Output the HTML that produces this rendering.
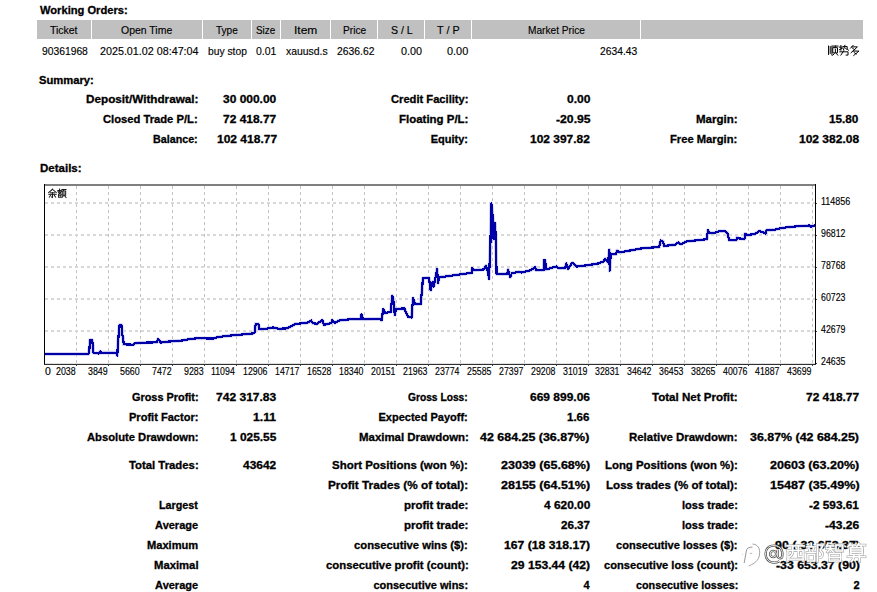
<!DOCTYPE html>
<html><head><meta charset="utf-8"><style>
html,body{margin:0;padding:0;background:#fff;width:877px;height:592px;overflow:hidden;position:relative}
.t{position:absolute;white-space:nowrap;font-family:"Liberation Sans",sans-serif;font-size:11px;line-height:13px;color:#000;transform-origin:0 0}
</style></head><body>
<div style="position:absolute;left:37px;top:20px;width:54px;height:19px;background:#c0c0c0"></div>
<div style="position:absolute;left:92px;top:20px;width:110px;height:19px;background:#c0c0c0"></div>
<div style="position:absolute;left:203px;top:20px;width:48px;height:19px;background:#c0c0c0"></div>
<div style="position:absolute;left:252px;top:20px;width:28px;height:19px;background:#c0c0c0"></div>
<div style="position:absolute;left:281px;top:20px;width:49px;height:19px;background:#c0c0c0"></div>
<div style="position:absolute;left:331px;top:20px;width:46px;height:19px;background:#c0c0c0"></div>
<div style="position:absolute;left:378px;top:20px;width:46px;height:19px;background:#c0c0c0"></div>
<div style="position:absolute;left:425px;top:20px;width:46px;height:19px;background:#c0c0c0"></div>
<div style="position:absolute;left:472px;top:20px;width:168px;height:19px;background:#c0c0c0"></div>
<div style="position:absolute;left:641px;top:20px;width:222px;height:19px;background:#c0c0c0"></div>
<svg style="position:absolute;left:0;top:0" width="877" height="592"><path d="M76.5 186V363" stroke="#c4c4c4" stroke-dasharray="3,3" fill="none"/><path d="M108.5 186V363" stroke="#c4c4c4" stroke-dasharray="3,3" fill="none"/><path d="M140.5 186V363" stroke="#c4c4c4" stroke-dasharray="3,3" fill="none"/><path d="M172.5 186V363" stroke="#c4c4c4" stroke-dasharray="3,3" fill="none"/><path d="M204.5 186V363" stroke="#c4c4c4" stroke-dasharray="3,3" fill="none"/><path d="M236.5 186V363" stroke="#c4c4c4" stroke-dasharray="3,3" fill="none"/><path d="M268.5 186V363" stroke="#c4c4c4" stroke-dasharray="3,3" fill="none"/><path d="M300.5 186V363" stroke="#c4c4c4" stroke-dasharray="3,3" fill="none"/><path d="M332.5 186V363" stroke="#c4c4c4" stroke-dasharray="3,3" fill="none"/><path d="M364.5 186V363" stroke="#c4c4c4" stroke-dasharray="3,3" fill="none"/><path d="M396.5 186V363" stroke="#c4c4c4" stroke-dasharray="3,3" fill="none"/><path d="M428.5 186V363" stroke="#c4c4c4" stroke-dasharray="3,3" fill="none"/><path d="M460.5 186V363" stroke="#c4c4c4" stroke-dasharray="3,3" fill="none"/><path d="M492.5 186V363" stroke="#c4c4c4" stroke-dasharray="3,3" fill="none"/><path d="M524.5 186V363" stroke="#c4c4c4" stroke-dasharray="3,3" fill="none"/><path d="M556.5 186V363" stroke="#c4c4c4" stroke-dasharray="3,3" fill="none"/><path d="M588.5 186V363" stroke="#c4c4c4" stroke-dasharray="3,3" fill="none"/><path d="M620.5 186V363" stroke="#c4c4c4" stroke-dasharray="3,3" fill="none"/><path d="M652.5 186V363" stroke="#c4c4c4" stroke-dasharray="3,3" fill="none"/><path d="M684.5 186V363" stroke="#c4c4c4" stroke-dasharray="3,3" fill="none"/><path d="M716.5 186V363" stroke="#c4c4c4" stroke-dasharray="3,3" fill="none"/><path d="M748.5 186V363" stroke="#c4c4c4" stroke-dasharray="3,3" fill="none"/><path d="M780.5 186V363" stroke="#c4c4c4" stroke-dasharray="3,3" fill="none"/><path d="M812.5 186V363" stroke="#c4c4c4" stroke-dasharray="3,3" fill="none"/><path d="M45 203H815" stroke="#d8d8d8" stroke-width="2" stroke-dasharray="3,3" fill="none"/><path d="M45 235H815" stroke="#d8d8d8" stroke-width="2" stroke-dasharray="3,3" fill="none"/><path d="M45 267H815" stroke="#d8d8d8" stroke-width="2" stroke-dasharray="3,3" fill="none"/><path d="M45 299H815" stroke="#d8d8d8" stroke-width="2" stroke-dasharray="3,3" fill="none"/><path d="M45 331H815" stroke="#d8d8d8" stroke-width="2" stroke-dasharray="3,3" fill="none"/><rect x="44" y="184" width="772" height="2" fill="#808080"/><rect x="44" y="184" width="1" height="181" fill="#000"/><rect x="815" y="184" width="1" height="181" fill="#000"/><rect x="45" y="363" width="770" height="1" fill="#e0e0e0"/><rect x="44" y="364" width="772" height="1" fill="#303030"/><rect x="76" y="365" width="1" height="1" fill="#404040"/><rect x="108" y="365" width="1" height="1" fill="#404040"/><rect x="140" y="365" width="1" height="1" fill="#404040"/><rect x="172" y="365" width="1" height="1" fill="#404040"/><rect x="204" y="365" width="1" height="1" fill="#404040"/><rect x="236" y="365" width="1" height="1" fill="#404040"/><rect x="268" y="365" width="1" height="1" fill="#404040"/><rect x="300" y="365" width="1" height="1" fill="#404040"/><rect x="332" y="365" width="1" height="1" fill="#404040"/><rect x="364" y="365" width="1" height="1" fill="#404040"/><rect x="396" y="365" width="1" height="1" fill="#404040"/><rect x="428" y="365" width="1" height="1" fill="#404040"/><rect x="460" y="365" width="1" height="1" fill="#404040"/><rect x="492" y="365" width="1" height="1" fill="#404040"/><rect x="524" y="365" width="1" height="1" fill="#404040"/><rect x="556" y="365" width="1" height="1" fill="#404040"/><rect x="588" y="365" width="1" height="1" fill="#404040"/><rect x="620" y="365" width="1" height="1" fill="#404040"/><rect x="652" y="365" width="1" height="1" fill="#404040"/><rect x="684" y="365" width="1" height="1" fill="#404040"/><rect x="716" y="365" width="1" height="1" fill="#404040"/><rect x="748" y="365" width="1" height="1" fill="#404040"/><rect x="780" y="365" width="1" height="1" fill="#404040"/><rect x="812" y="365" width="1" height="1" fill="#404040"/><rect x="816" y="203" width="1" height="1" fill="#404040"/><rect x="816" y="235" width="1" height="1" fill="#404040"/><rect x="816" y="267" width="1" height="1" fill="#404040"/><rect x="816" y="299" width="1" height="1" fill="#404040"/><rect x="816" y="331" width="1" height="1" fill="#404040"/><rect x="816" y="363" width="1" height="1" fill="#404040"/></svg>
<svg style="position:absolute;left:0;top:0" width="877" height="592"><polyline points="45.0,354.0 88.5,354.0 89.5,348.0 90.0,340.0 92.0,340.0 93.0,346.0 93.3,352.6 99.0,353.5 100.2,351.5 101.0,352.6 116.5,352.6 117.3,355.5 118.0,342.4 119.5,325.0 121.4,325.0 122.2,335.2 123.0,337.0 123.7,344.3 133.6,344.7 134.4,343.5 140.0,342.8 157.0,342.3 158.0,339.2 160.8,342.5 168.0,341.6 182.7,340.5 190.0,339.0 197.0,338.3 213.7,338.5 218.2,337.0 232.0,335.4 242.0,334.5 253.0,333.4 254.7,332.0 255.7,324.0 258.4,324.2 259.3,329.3 265.7,328.8 273.0,327.5 278.5,328.8 286.7,328.4 292.0,326.0 295.0,323.9 300.0,323.5 307.7,322.6 311.3,320.6 312.5,323.0 316.8,323.9 322.3,320.2 324.0,324.8 331.4,323.0 332.3,320.2 335.0,323.0 338.7,320.6 349.6,319.3 360.0,319.3 360.5,319.4 361.4,314.5 363.2,319.4 380.5,318.8 381.5,320.3 383.3,309.3 385.0,313.0 390.6,312.0 392.4,295.7 393.7,302.0 394.8,314.8 396.0,309.0 404.3,308.4 408.0,316.6 411.6,317.6 413.0,298.4 415.2,303.9 420.7,303.9 422.2,288.4 422.9,278.3 428.9,277.8 430.7,290.2 432.6,282.0 433.8,286.5 437.1,269.2 438.0,282.9 439.0,277.4 471.8,272.8 472.3,268.0 473.8,270.2 483.7,269.5 486.0,265.7 488.2,272.5 489.0,278.6 490.5,240.6 491.3,203.4 492.8,217.8 493.6,239.0 494.3,223.0 495.0,223.0 495.8,239.0 496.6,274.0 507.2,274.0 508.0,269.5 510.3,277.0 511.8,273.3 518.6,271.7 521.7,272.5 530.8,270.2 535.3,267.2 536.0,270.2 543.7,270.0 544.0,260.3 545.2,260.3 546.0,269.5 556.6,266.4 558.6,268.3 565.0,268.3 566.3,263.4 568.1,268.8 572.3,262.8 576.9,266.5 587.8,265.2 598.8,263.4 603.4,261.5 605.2,258.8 608.0,262.4 609.4,249.7 609.7,270.7 610.7,254.2 616.0,254.2 617.0,250.6 619.8,252.4 642.6,248.2 659.0,247.0 660.8,240.5 663.0,241.5 664.0,246.0 675.4,244.6 678.2,242.4 681.0,244.2 686.4,241.5 706.8,239.2 707.9,230.3 709.6,233.0 713.7,233.0 719.2,231.3 725.3,231.3 727.4,233.0 729.4,240.3 736.3,240.3 737.0,237.6 739.0,238.5 744.5,238.9 745.1,233.7 747.2,235.1 754.7,234.0 759.5,231.0 762.9,232.4 765.7,233.7 766.3,230.3 775.2,229.6 779.3,228.5 787.6,227.2 798.5,226.2 809.4,225.5 810.8,226.6 814.9,225.5" fill="none" stroke="#c8c8ec" stroke-width="3.6" stroke-linejoin="round"/><polyline points="45.0,354.0 88.5,354.0 89.5,348.0 90.0,340.0 92.0,340.0 93.0,346.0 93.3,352.6 99.0,353.5 100.2,351.5 101.0,352.6 116.5,352.6 117.3,355.5 118.0,342.4 119.5,325.0 121.4,325.0 122.2,335.2 123.0,337.0 123.7,344.3 133.6,344.7 134.4,343.5 140.0,342.8 157.0,342.3 158.0,339.2 160.8,342.5 168.0,341.6 182.7,340.5 190.0,339.0 197.0,338.3 213.7,338.5 218.2,337.0 232.0,335.4 242.0,334.5 253.0,333.4 254.7,332.0 255.7,324.0 258.4,324.2 259.3,329.3 265.7,328.8 273.0,327.5 278.5,328.8 286.7,328.4 292.0,326.0 295.0,323.9 300.0,323.5 307.7,322.6 311.3,320.6 312.5,323.0 316.8,323.9 322.3,320.2 324.0,324.8 331.4,323.0 332.3,320.2 335.0,323.0 338.7,320.6 349.6,319.3 360.0,319.3 360.5,319.4 361.4,314.5 363.2,319.4 380.5,318.8 381.5,320.3 383.3,309.3 385.0,313.0 390.6,312.0 392.4,295.7 393.7,302.0 394.8,314.8 396.0,309.0 404.3,308.4 408.0,316.6 411.6,317.6 413.0,298.4 415.2,303.9 420.7,303.9 422.2,288.4 422.9,278.3 428.9,277.8 430.7,290.2 432.6,282.0 433.8,286.5 437.1,269.2 438.0,282.9 439.0,277.4 471.8,272.8 472.3,268.0 473.8,270.2 483.7,269.5 486.0,265.7 488.2,272.5 489.0,278.6 490.5,240.6 491.3,203.4 492.8,217.8 493.6,239.0 494.3,223.0 495.0,223.0 495.8,239.0 496.6,274.0 507.2,274.0 508.0,269.5 510.3,277.0 511.8,273.3 518.6,271.7 521.7,272.5 530.8,270.2 535.3,267.2 536.0,270.2 543.7,270.0 544.0,260.3 545.2,260.3 546.0,269.5 556.6,266.4 558.6,268.3 565.0,268.3 566.3,263.4 568.1,268.8 572.3,262.8 576.9,266.5 587.8,265.2 598.8,263.4 603.4,261.5 605.2,258.8 608.0,262.4 609.4,249.7 609.7,270.7 610.7,254.2 616.0,254.2 617.0,250.6 619.8,252.4 642.6,248.2 659.0,247.0 660.8,240.5 663.0,241.5 664.0,246.0 675.4,244.6 678.2,242.4 681.0,244.2 686.4,241.5 706.8,239.2 707.9,230.3 709.6,233.0 713.7,233.0 719.2,231.3 725.3,231.3 727.4,233.0 729.4,240.3 736.3,240.3 737.0,237.6 739.0,238.5 744.5,238.9 745.1,233.7 747.2,235.1 754.7,234.0 759.5,231.0 762.9,232.4 765.7,233.7 766.3,230.3 775.2,229.6 779.3,228.5 787.6,227.2 798.5,226.2 809.4,225.5 810.8,226.6 814.9,225.5" fill="none" stroke="#0000a8" stroke-width="2.2" stroke-linejoin="round" shape-rendering="crispEdges"/></svg>
<div class="t" style="left:40.30px;top:4px;font-weight:bold;-webkit-text-stroke:0.3px #000;transform:scaleX(1.0128);">Working Orders:</div>
<div class="t" style="left:49.80px;top:24px;-webkit-text-stroke:0.15px #000;transform:scaleX(0.9517);">Ticket</div>
<div class="t" style="left:121.30px;top:24px;-webkit-text-stroke:0.15px #000;transform:scaleX(0.9519);">Open Time</div>
<div class="t" style="left:216.10px;top:24px;-webkit-text-stroke:0.15px #000;transform:scaleX(0.9125);">Type</div>
<div class="t" style="left:256.30px;top:24px;-webkit-text-stroke:0.15px #000;transform:scaleX(0.8952);">Size</div>
<div class="t" style="left:293.61px;top:24px;-webkit-text-stroke:0.15px #000;transform:scaleX(1.09);">Item</div>
<div class="t" style="left:342.80px;top:24px;-webkit-text-stroke:0.15px #000;transform:scaleX(0.924);">Price</div>
<div class="t" style="left:390.50px;top:24px;-webkit-text-stroke:0.15px #000;transform:scaleX(0.9609);">S / L</div>
<div class="t" style="left:436.90px;top:24px;-webkit-text-stroke:0.15px #000;transform:scaleX(0.9826);">T / P</div>
<div class="t" style="left:527.70px;top:24px;-webkit-text-stroke:0.15px #000;transform:scaleX(0.9226);">Market Price</div>
<div class="t" style="left:42.30px;top:45px;-webkit-text-stroke:0.15px #000;transform:scaleX(0.9367);">90361968</div>
<div class="t" style="left:100.00px;top:45px;-webkit-text-stroke:0.15px #000;transform:scaleX(0.9762);">2025.01.02 08:47:04</div>
<div class="t" style="left:207.90px;top:45px;-webkit-text-stroke:0.15px #000;transform:scaleX(0.9357);">buy stop</div>
<div class="t" style="left:256.30px;top:45px;-webkit-text-stroke:0.15px #000;transform:scaleX(0.9524);">0.01</div>
<div class="t" style="left:285.60px;top:45px;-webkit-text-stroke:0.15px #000;transform:scaleX(0.9477);">xauusd.s</div>
<div class="t" style="left:336.60px;top:45px;-webkit-text-stroke:0.15px #000;transform:scaleX(0.94);">2636.62</div>
<div class="t" style="left:400.50px;top:45px;-webkit-text-stroke:0.15px #000;transform:scaleX(0.981);">0.00</div>
<div class="t" style="left:447.00px;top:45px;-webkit-text-stroke:0.15px #000;transform:scaleX(0.9905);">0.00</div>
<div class="t" style="left:599.50px;top:45px;-webkit-text-stroke:0.15px #000;transform:scaleX(0.935);">2634.43</div>
<div class="t" style="left:39.30px;top:74px;font-weight:bold;-webkit-text-stroke:0.3px #000;transform:scaleX(1.0185);">Summary:</div>
<div class="t" style="left:39.50px;top:162px;font-weight:bold;-webkit-text-stroke:0.3px #000;transform:scaleX(1.0462);">Details:</div>
<div class="t" style="left:86.20px;top:93px;font-weight:bold;-webkit-text-stroke:0.3px #000;transform:scaleX(1.0648);">Deposit/Withdrawal:</div>
<div class="t" style="left:223.30px;top:93px;font-weight:bold;-webkit-text-stroke:0.3px #000;transform:scaleX(1.0878);">30 000.00</div>
<div class="t" style="left:390.50px;top:93px;font-weight:bold;-webkit-text-stroke:0.3px #000;transform:scaleX(1.0145);">Credit Facility:</div>
<div class="t" style="left:567.00px;top:93px;font-weight:bold;-webkit-text-stroke:0.3px #000;transform:scaleX(1.0952);">0.00</div>
<div class="t" style="left:103.30px;top:113px;font-weight:bold;-webkit-text-stroke:0.3px #000;transform:scaleX(1.0183);">Closed Trade P/L:</div>
<div class="t" style="left:223.30px;top:113px;font-weight:bold;-webkit-text-stroke:0.3px #000;transform:scaleX(1.0878);">72 418.77</div>
<div class="t" style="left:398.80px;top:113px;font-weight:bold;-webkit-text-stroke:0.3px #000;transform:scaleX(1.0424);">Floating P/L:</div>
<div class="t" style="left:555.60px;top:113px;font-weight:bold;-webkit-text-stroke:0.3px #000;transform:scaleX(1.1097);">-20.95</div>
<div class="t" style="left:696.40px;top:113px;font-weight:bold;-webkit-text-stroke:0.3px #000;transform:scaleX(1.0487);">Margin:</div>
<div class="t" style="left:829.40px;top:113px;font-weight:bold;-webkit-text-stroke:0.3px #000;transform:scaleX(1.0679);">15.80</div>
<div class="t" style="left:153.20px;top:133px;font-weight:bold;-webkit-text-stroke:0.3px #000;transform:scaleX(0.9739);">Balance:</div>
<div class="t" style="left:216.60px;top:133px;font-weight:bold;-webkit-text-stroke:0.3px #000;transform:scaleX(1.0909);">102 418.77</div>
<div class="t" style="left:430.70px;top:133px;font-weight:bold;-webkit-text-stroke:0.3px #000;">Equity:</div>
<div class="t" style="left:530.20px;top:133px;font-weight:bold;-webkit-text-stroke:0.3px #000;transform:scaleX(1.0873);">102 397.82</div>
<div class="t" style="left:670.10px;top:133px;font-weight:bold;-webkit-text-stroke:0.3px #000;transform:scaleX(1.0182);">Free Margin:</div>
<div class="t" style="left:799.30px;top:133px;font-weight:bold;-webkit-text-stroke:0.3px #000;transform:scaleX(1.0909);">102 382.08</div>
<div class="t" style="left:131.70px;top:391px;font-weight:bold;-webkit-text-stroke:0.3px #000;transform:scaleX(0.9896);">Gross Profit:</div>
<div class="t" style="left:216.40px;top:391px;font-weight:bold;-webkit-text-stroke:0.3px #000;transform:scaleX(1.0945);">742 317.83</div>
<div class="t" style="left:408.10px;top:391px;font-weight:bold;-webkit-text-stroke:0.3px #000;transform:scaleX(0.9297);">Gross Loss:</div>
<div class="t" style="left:530.10px;top:391px;font-weight:bold;-webkit-text-stroke:0.3px #000;transform:scaleX(1.0891);">669 899.06</div>
<div class="t" style="left:652.30px;top:391px;font-weight:bold;-webkit-text-stroke:0.3px #000;transform:scaleX(1.0494);">Total Net Profit:</div>
<div class="t" style="left:806.10px;top:391px;font-weight:bold;-webkit-text-stroke:0.3px #000;transform:scaleX(1.0857);">72 418.77</div>
<div class="t" style="left:128.70px;top:411px;font-weight:bold;-webkit-text-stroke:0.3px #000;transform:scaleX(1.0043);">Profit Factor:</div>
<div class="t" style="left:253.40px;top:411px;font-weight:bold;-webkit-text-stroke:0.3px #000;transform:scaleX(1.1048);">1.11</div>
<div class="t" style="left:378.50px;top:411px;font-weight:bold;-webkit-text-stroke:0.3px #000;">Expected Payoff:</div>
<div class="t" style="left:567.00px;top:411px;font-weight:bold;-webkit-text-stroke:0.3px #000;transform:scaleX(1.0455);">1.66</div>
<div class="t" style="left:86.80px;top:431px;font-weight:bold;-webkit-text-stroke:0.3px #000;transform:scaleX(1.0202);">Absolute Drawdown:</div>
<div class="t" style="left:230.10px;top:431px;font-weight:bold;-webkit-text-stroke:0.3px #000;transform:scaleX(1.0814);">1 025.55</div>
<div class="t" style="left:358.50px;top:431px;font-weight:bold;-webkit-text-stroke:0.3px #000;transform:scaleX(1.039);">Maximal Drawdown:</div>
<div class="t" style="left:480.30px;top:431px;font-weight:bold;-webkit-text-stroke:0.3px #000;transform:scaleX(1.1309);">42 684.25 (36.87%)</div>
<div class="t" style="left:629.20px;top:431px;font-weight:bold;-webkit-text-stroke:0.3px #000;transform:scaleX(1.0394);">Relative Drawdown:</div>
<div class="t" style="left:749.90px;top:431px;font-weight:bold;-webkit-text-stroke:0.3px #000;transform:scaleX(1.1278);">36.87% (42 684.25)</div>
<div class="t" style="left:129.00px;top:459px;font-weight:bold;-webkit-text-stroke:0.3px #000;transform:scaleX(1.0299);">Total Trades:</div>
<div class="t" style="left:243.00px;top:459px;font-weight:bold;-webkit-text-stroke:0.3px #000;transform:scaleX(1.0839);">43642</div>
<div class="t" style="left:332.00px;top:459px;font-weight:bold;-webkit-text-stroke:0.3px #000;transform:scaleX(1.0431);">Short Positions (won %):</div>
<div class="t" style="left:501.20px;top:459px;font-weight:bold;-webkit-text-stroke:0.3px #000;transform:scaleX(1.1385);">23039 (65.68%)</div>
<div class="t" style="left:604.90px;top:459px;font-weight:bold;-webkit-text-stroke:0.3px #000;transform:scaleX(1.0344);">Long Positions (won %):</div>
<div class="t" style="left:770.40px;top:459px;font-weight:bold;-webkit-text-stroke:0.3px #000;transform:scaleX(1.1397);">20603 (63.20%)</div>
<div class="t" style="left:328.30px;top:479px;font-weight:bold;-webkit-text-stroke:0.3px #000;transform:scaleX(1.0715);">Profit Trades (% of total):</div>
<div class="t" style="left:501.20px;top:479px;font-weight:bold;-webkit-text-stroke:0.3px #000;transform:scaleX(1.1385);">28155 (64.51%)</div>
<div class="t" style="left:605.90px;top:479px;font-weight:bold;-webkit-text-stroke:0.3px #000;transform:scaleX(1.0512);">Loss trades (% of total):</div>
<div class="t" style="left:770.00px;top:479px;font-weight:bold;-webkit-text-stroke:0.3px #000;transform:scaleX(1.1449);">15487 (35.49%)</div>
<div class="t" style="left:158.90px;top:499px;font-weight:bold;-webkit-text-stroke:0.3px #000;transform:scaleX(0.9775);">Largest</div>
<div class="t" style="left:404.00px;top:499px;font-weight:bold;-webkit-text-stroke:0.3px #000;transform:scaleX(1.0426);">profit trade:</div>
<div class="t" style="left:543.50px;top:499px;font-weight:bold;-webkit-text-stroke:0.3px #000;transform:scaleX(1.0814);">4 620.00</div>
<div class="t" style="left:682.00px;top:499px;font-weight:bold;-webkit-text-stroke:0.3px #000;transform:scaleX(1.0055);">loss trade:</div>
<div class="t" style="left:808.80px;top:499px;font-weight:bold;-webkit-text-stroke:0.3px #000;transform:scaleX(1.0745);">-2 593.61</div>
<div class="t" style="left:155.10px;top:519px;font-weight:bold;-webkit-text-stroke:0.3px #000;">Average</div>
<div class="t" style="left:404.00px;top:519px;font-weight:bold;-webkit-text-stroke:0.3px #000;transform:scaleX(1.0426);">profit trade:</div>
<div class="t" style="left:560.50px;top:519px;font-weight:bold;-webkit-text-stroke:0.3px #000;transform:scaleX(1.0536);">26.37</div>
<div class="t" style="left:682.00px;top:519px;font-weight:bold;-webkit-text-stroke:0.3px #000;transform:scaleX(1.0055);">loss trade:</div>
<div class="t" style="left:825.40px;top:519px;font-weight:bold;-webkit-text-stroke:0.3px #000;transform:scaleX(1.0935);">-43.26</div>
<div class="t" style="left:146.60px;top:539px;font-weight:bold;-webkit-text-stroke:0.3px #000;transform:scaleX(1.0078);">Maximum</div>
<div class="t" style="left:354.00px;top:539px;font-weight:bold;-webkit-text-stroke:0.3px #000;transform:scaleX(1.0234);">consecutive wins ($):</div>
<div class="t" style="left:503.60px;top:539px;font-weight:bold;-webkit-text-stroke:0.3px #000;transform:scaleX(1.1077);">167 (18 318.17)</div>
<div class="t" style="left:615.80px;top:539px;font-weight:bold;-webkit-text-stroke:0.3px #000;transform:scaleX(1.0041);">consecutive losses ($):</div>
<div class="t" style="left:774.60px;top:539px;font-weight:bold;-webkit-text-stroke:0.3px #000;transform:scaleX(1.1293);">90 (-33 653.37)</div>
<div class="t" style="left:153.90px;top:559px;font-weight:bold;-webkit-text-stroke:0.3px #000;transform:scaleX(1.0256);">Maximal</div>
<div class="t" style="left:325.50px;top:559px;font-weight:bold;-webkit-text-stroke:0.3px #000;transform:scaleX(1.0297);">consecutive profit (count):</div>
<div class="t" style="left:510.50px;top:559px;font-weight:bold;-webkit-text-stroke:0.3px #000;transform:scaleX(1.1042);">29 153.44 (42)</div>
<div class="t" style="left:603.90px;top:559px;font-weight:bold;-webkit-text-stroke:0.3px #000;transform:scaleX(1.0106);">consecutive loss (count):</div>
<div class="t" style="left:775.60px;top:559px;font-weight:bold;-webkit-text-stroke:0.3px #000;transform:scaleX(1.116);">-33 653.37 (90)</div>
<div class="t" style="left:155.10px;top:579px;font-weight:bold;-webkit-text-stroke:0.3px #000;">Average</div>
<div class="t" style="left:373.40px;top:579px;font-weight:bold;-webkit-text-stroke:0.3px #000;">consecutive wins:</div>
<div class="t" style="left:583.60px;top:579px;font-weight:bold;-webkit-text-stroke:0.3px #000;">4</div>
<div class="t" style="left:635.50px;top:579px;font-weight:bold;-webkit-text-stroke:0.3px #000;transform:scaleX(0.9788);">consecutive losses:</div>
<div class="t" style="left:853.60px;top:579px;font-weight:bold;-webkit-text-stroke:0.3px #000;">2</div>
<div class="t" style="left:45.10px;top:365px;font-size:10.5px;-webkit-text-stroke:0.15px #000;">0</div>
<div class="t" style="left:56.10px;top:365px;font-size:10.5px;-webkit-text-stroke:0.15px #000;transform:scaleX(0.8435);">2038</div>
<div class="t" style="left:88.10px;top:365px;font-size:10.5px;-webkit-text-stroke:0.15px #000;transform:scaleX(0.8435);">3849</div>
<div class="t" style="left:120.10px;top:365px;font-size:10.5px;-webkit-text-stroke:0.15px #000;transform:scaleX(0.8435);">5660</div>
<div class="t" style="left:152.10px;top:365px;font-size:10.5px;-webkit-text-stroke:0.15px #000;transform:scaleX(0.8435);">7472</div>
<div class="t" style="left:184.10px;top:365px;font-size:10.5px;-webkit-text-stroke:0.15px #000;transform:scaleX(0.8435);">9283</div>
<div class="t" style="left:211.25px;top:365px;font-size:10.5px;-webkit-text-stroke:0.15px #000;transform:scaleX(0.8362);">11094</div>
<div class="t" style="left:243.25px;top:365px;font-size:10.5px;-webkit-text-stroke:0.15px #000;transform:scaleX(0.8362);">12906</div>
<div class="t" style="left:275.25px;top:365px;font-size:10.5px;-webkit-text-stroke:0.15px #000;transform:scaleX(0.8362);">14717</div>
<div class="t" style="left:307.25px;top:365px;font-size:10.5px;-webkit-text-stroke:0.15px #000;transform:scaleX(0.8362);">16528</div>
<div class="t" style="left:339.25px;top:365px;font-size:10.5px;-webkit-text-stroke:0.15px #000;transform:scaleX(0.8362);">18340</div>
<div class="t" style="left:371.25px;top:365px;font-size:10.5px;-webkit-text-stroke:0.15px #000;transform:scaleX(0.8362);">20151</div>
<div class="t" style="left:403.25px;top:365px;font-size:10.5px;-webkit-text-stroke:0.15px #000;transform:scaleX(0.8362);">21963</div>
<div class="t" style="left:435.25px;top:365px;font-size:10.5px;-webkit-text-stroke:0.15px #000;transform:scaleX(0.8362);">23774</div>
<div class="t" style="left:467.25px;top:365px;font-size:10.5px;-webkit-text-stroke:0.15px #000;transform:scaleX(0.8362);">25585</div>
<div class="t" style="left:499.25px;top:365px;font-size:10.5px;-webkit-text-stroke:0.15px #000;transform:scaleX(0.8362);">27397</div>
<div class="t" style="left:531.25px;top:365px;font-size:10.5px;-webkit-text-stroke:0.15px #000;transform:scaleX(0.8362);">29208</div>
<div class="t" style="left:563.25px;top:365px;font-size:10.5px;-webkit-text-stroke:0.15px #000;transform:scaleX(0.8362);">31019</div>
<div class="t" style="left:595.25px;top:365px;font-size:10.5px;-webkit-text-stroke:0.15px #000;transform:scaleX(0.8362);">32831</div>
<div class="t" style="left:627.25px;top:365px;font-size:10.5px;-webkit-text-stroke:0.15px #000;transform:scaleX(0.8362);">34642</div>
<div class="t" style="left:659.25px;top:365px;font-size:10.5px;-webkit-text-stroke:0.15px #000;transform:scaleX(0.8362);">36453</div>
<div class="t" style="left:691.25px;top:365px;font-size:10.5px;-webkit-text-stroke:0.15px #000;transform:scaleX(0.8362);">38265</div>
<div class="t" style="left:723.25px;top:365px;font-size:10.5px;-webkit-text-stroke:0.15px #000;transform:scaleX(0.8362);">40076</div>
<div class="t" style="left:755.25px;top:365px;font-size:10.5px;-webkit-text-stroke:0.15px #000;transform:scaleX(0.8362);">41887</div>
<div class="t" style="left:787.25px;top:365px;font-size:10.5px;-webkit-text-stroke:0.15px #000;transform:scaleX(0.8362);">43699</div>
<div class="t" style="left:820.50px;top:195px;font-size:10.5px;-webkit-text-stroke:0.15px #000;transform:scaleX(0.8559);">114856</div>
<div class="t" style="left:820.50px;top:227px;font-size:10.5px;-webkit-text-stroke:0.15px #000;transform:scaleX(0.8362);">96812</div>
<div class="t" style="left:820.50px;top:259px;font-size:10.5px;-webkit-text-stroke:0.15px #000;transform:scaleX(0.8362);">78768</div>
<div class="t" style="left:820.50px;top:291px;font-size:10.5px;-webkit-text-stroke:0.15px #000;transform:scaleX(0.8362);">60723</div>
<div class="t" style="left:820.50px;top:323px;font-size:10.5px;-webkit-text-stroke:0.15px #000;transform:scaleX(0.8362);">42679</div>
<div class="t" style="left:820.50px;top:355px;font-size:10.5px;-webkit-text-stroke:0.15px #000;transform:scaleX(0.8362);">24635</div>
<svg style="position:absolute;left:0;top:0" width="877" height="592"><g transform="translate(827.5,45) scale(1.05)" fill="none" stroke="#000" stroke-width="0.952" stroke-linecap="square"><path d="M1,1 L1,9"/><path d="M2.6,1.5 L2.6,8"/><path d="M4.2,1 L4.2,9.5"/><path d="M5,1 H10"/><path d="M7.5,1 L7,2.5"/><path d="M5.5,2.5 H9.5 V7.5 H5.5 Z"/><path d="M7.5,4 V7"/><path d="M6.5,8.3 L5,9.7"/><path d="M8.5,8.3 L10,9.7"/></g><g transform="translate(838.8,45) scale(1.05)" fill="none" stroke="#000" stroke-width="0.952" stroke-linecap="square"><path d="M0.5,2 H3"/><path d="M2,0.5 V5"/><path d="M0.5,4.5 L3.5,3"/><path d="M4,1.5 H8 V4 L9.3,5"/><path d="M5.8,0.3 L4.5,4.5"/><path d="M6.5,3 L7.2,4"/><path d="M1,6.5 H8.8 V9.6 H7"/><path d="M4.7,5.5 L2,9.6"/></g><g transform="translate(849.5,45) scale(1.05)" fill="none" stroke="#000" stroke-width="0.952" stroke-linecap="square"><path d="M3.5,0.3 L1,3"/><path d="M2.2,1.8 H7.5 L4,5"/><path d="M3,3.2 L5,4.5"/><path d="M5,4.3 L1.5,7.3"/><path d="M3.5,5.8 H9 L4,10"/><path d="M4.5,7.3 L6.5,8.5"/></g><g transform="translate(48.2,189) scale(0.95)" fill="none" stroke="#1a1a1a" stroke-width="1.053" stroke-linecap="square"><path d="M4.5,0.3 L0.5,3.8"/><path d="M4.5,0.3 L8.5,3.8"/><path d="M2.3,4 H6.7"/><path d="M0.6,5.6 H8.4"/><path d="M4.5,4 V8.8 L3.6,8.4"/><path d="M2.6,6.6 L1.2,8.6"/><path d="M6.4,6.6 L7.8,8.6"/></g><g transform="translate(57.5,189) scale(0.95)" fill="none" stroke="#1a1a1a" stroke-width="1.053" stroke-linecap="square"><path d="M2.2,0 V0.8"/><path d="M0.6,1.5 H4 V2.5"/><path d="M0.6,1.5 V2.5"/><path d="M2.2,2.5 L1,4"/><path d="M1.5,3.2 H3.7 L1,6"/><path d="M2.2,4.7 L4,5.6"/><path d="M1.1,6.6 H3.6 V8.8 H1.1 Z"/><path d="M4.6,0.5 H9"/><path d="M6.8,0.5 L6.2,2"/><path d="M5,2 H8.6 V6.6 H5 Z"/><path d="M6.8,3.5 V6"/><path d="M6,7.2 L4.6,9"/><path d="M7.6,7.2 L9,9"/></g></svg>
<svg style="position:absolute;left:0;top:0" width="877" height="592"><g transform="translate(786,543) scale(0.95)" fill="none" stroke="#a0a0a0" stroke-width="2.737" stroke-linecap="square"><path d="M1,3 H19"/><path d="M7,3 V10"/><path d="M13,3 V10"/><path d="M2,8 H18 V19"/><path d="M2,8 V19"/><path d="M2,17 H18"/><path d="M7,10 Q6.5,13.5 3,15"/><path d="M13,10 V14 H17"/></g><g transform="translate(806,543) scale(0.95)" fill="none" stroke="#a0a0a0" stroke-width="2.737" stroke-linecap="square"><path d="M5.5,0.5 V3"/><path d="M1,4 H10"/><path d="M3,5.5 L4,8.5"/><path d="M8,5.5 L7,8.5"/><path d="M1,10 H10"/><path d="M2,12 H9 V19 H2 Z"/><path d="M12,2 V19.5"/><path d="M12,2 H18 L15,8 Q19.5,11.5 16,15 H14"/></g><g transform="translate(825.5,543) scale(0.95)" fill="none" stroke="#a0a0a0" stroke-width="2.737" stroke-linecap="square"><path d="M2.5,0.5 L1,4"/><path d="M1.5,3 H8.5"/><path d="M1,6 H9"/><path d="M5,3 V6 L2,9.5"/><path d="M5.5,7 L8.5,9.5"/><path d="M11,2 H18 V8.5 H11 Z"/><path d="M4,11 H16 V19 H4 Z"/><path d="M4,15 H16"/></g><g transform="translate(847,543) scale(0.95)" fill="none" stroke="#a0a0a0" stroke-width="2.737" stroke-linecap="square"><path d="M3.5,0.5 L1,4"/><path d="M3,2.2 H9"/><path d="M5.5,3 L6.5,4.3"/><path d="M12.5,0.5 L10,4"/><path d="M12,2.2 H19"/><path d="M14.5,3 L15.5,4.3"/><path d="M4,5 H16 V12 H4 Z"/><path d="M4,7.4 H16"/><path d="M4,9.7 H16"/><path d="M1,14.5 H19"/><path d="M7.5,12 Q7.5,17 4.5,19.5"/><path d="M13,12 V19.5"/></g><g transform="translate(786,543) scale(0.95)" fill="none" stroke="#ffffff" stroke-width="1.579" stroke-linecap="square"><path d="M1,3 H19"/><path d="M7,3 V10"/><path d="M13,3 V10"/><path d="M2,8 H18 V19"/><path d="M2,8 V19"/><path d="M2,17 H18"/><path d="M7,10 Q6.5,13.5 3,15"/><path d="M13,10 V14 H17"/></g><g transform="translate(806,543) scale(0.95)" fill="none" stroke="#ffffff" stroke-width="1.579" stroke-linecap="square"><path d="M5.5,0.5 V3"/><path d="M1,4 H10"/><path d="M3,5.5 L4,8.5"/><path d="M8,5.5 L7,8.5"/><path d="M1,10 H10"/><path d="M2,12 H9 V19 H2 Z"/><path d="M12,2 V19.5"/><path d="M12,2 H18 L15,8 Q19.5,11.5 16,15 H14"/></g><g transform="translate(825.5,543) scale(0.95)" fill="none" stroke="#ffffff" stroke-width="1.579" stroke-linecap="square"><path d="M2.5,0.5 L1,4"/><path d="M1.5,3 H8.5"/><path d="M1,6 H9"/><path d="M5,3 V6 L2,9.5"/><path d="M5.5,7 L8.5,9.5"/><path d="M11,2 H18 V8.5 H11 Z"/><path d="M4,11 H16 V19 H4 Z"/><path d="M4,15 H16"/></g><g transform="translate(847,543) scale(0.95)" fill="none" stroke="#ffffff" stroke-width="1.579" stroke-linecap="square"><path d="M3.5,0.5 L1,4"/><path d="M3,2.2 H9"/><path d="M5.5,3 L6.5,4.3"/><path d="M12.5,0.5 L10,4"/><path d="M12,2.2 H19"/><path d="M14.5,3 L15.5,4.3"/><path d="M4,5 H16 V12 H4 Z"/><path d="M4,7.4 H16"/><path d="M4,9.7 H16"/><path d="M1,14.5 H19"/><path d="M7.5,12 Q7.5,17 4.5,19.5"/><path d="M13,12 V19.5"/></g><path d="M752.5,544 C760,544.5 760.5,552 759,557 C757.5,562 752,564.5 748.7,566" fill="none" stroke="#9a9a9a" stroke-width="0.9"/><path d="M752.5,547.2 C749,546.8 746.5,548.5 746.3,551 L744.2,563" fill="none" stroke="#8a8a8a" stroke-width="0.9"/><path d="M749.9,553.4 H752.2 M742.4,554.3 L743,555" fill="none" stroke="#aaaaaa" stroke-width="0.8"/><path d="M782,557.5 C783.3,552 781.6,545.6 774,545.6 C767.6,545.6 765.6,550 765.6,554 C765.6,558.6 768.6,562.6 774,562.6 C776.2,562.6 778,562 779.4,561.2" fill="none" stroke="#505050" stroke-width="2.4"/><circle cx="773.2" cy="554" r="3.1" fill="none" stroke="#505050" stroke-width="2.4"/><path d="M777.6,549.8 V556.3 C777.6,558.4 780.6,558.8 782,557.5" fill="none" stroke="#505050" stroke-width="2.4"/><path d="M782,557.5 C783.3,552 781.6,545.6 774,545.6 C767.6,545.6 765.6,550 765.6,554 C765.6,558.6 768.6,562.6 774,562.6 C776.2,562.6 778,562 779.4,561.2" fill="none" stroke="#ffffff" stroke-width="0.9"/><circle cx="773.2" cy="554" r="3.1" fill="none" stroke="#ffffff" stroke-width="0.9"/><path d="M777.6,549.8 V556.3 C777.6,558.4 780.6,558.8 782,557.5" fill="none" stroke="#ffffff" stroke-width="0.9"/></svg>
</body></html>
